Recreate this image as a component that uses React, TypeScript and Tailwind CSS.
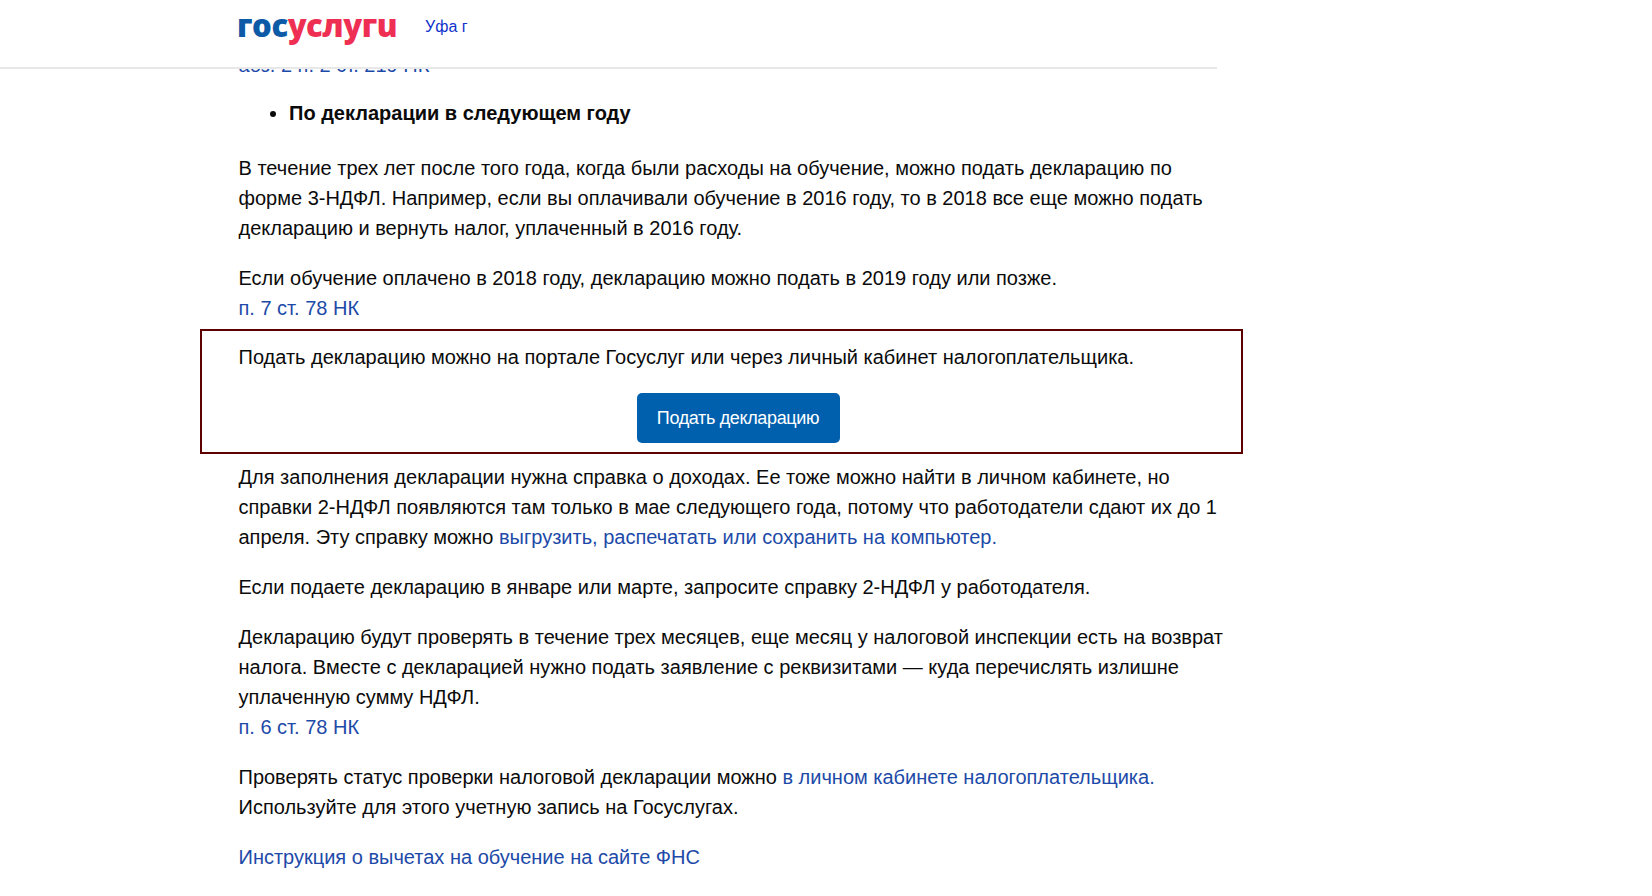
const L = ({ children }: { children: React.ReactNode }) => (
  <a className="text-[#1d4aa8]">{children}</a>
);

export default function App() {
  return (
    <div className="relative h-[896px] w-[1652px] overflow-hidden bg-white font-['Liberation_Sans',Arial,sans-serif] text-[20px] leading-[30px] text-[#0b0b0b]">
      <header className="absolute left-0 top-0 z-10 flex h-[69px] w-[1217px] items-start border-b-2 border-[#e8e8e8] bg-white pl-[237px]">
        <span className="mt-[4px] font-['Open_Sans',sans-serif] text-[31px] leading-[42px] font-extrabold tracking-[-0.45px]">
          <span className="text-[#0d5aa7]">гос</span>
          <span className="text-[#ee2f53]">услугu</span>
        </span>
        <span className="ml-[28px] mt-[12px] text-[16px] leading-[30px] text-[#1133cc]">Уфа г</span>
      </header>

      <main className="flex flex-col pl-[238.5px] pt-[50px] whitespace-nowrap">
        <p><L>абз. 2 п. 2 ст. 219 НК</L></p>
        <ul className="mt-[18px] list-disc pl-[50.5px] font-bold"><li>По декларации в следующем году</li></ul>
        <p className="mt-[25px]">
          В течение трех лет после того года, когда были расходы на обучение, можно подать декларацию по<br />
          форме 3-НДФЛ. Например, если вы оплачивали обучение в 2016 году, то в 2018 все еще можно подать<br />
          декларацию и вернуть налог, уплаченный в 2016 году.
        </p>
        <p className="mt-[20px]">
          Если обучение оплачено в 2018 году, декларацию можно подать в 2019 году или позже.<br />
          <L>п. 7 ст. 78 НК</L>
        </p>
        <section className="ml-[-38.5px] mt-[6px] flex h-[125px] w-[1043px] flex-col border-2 border-[#5c0000] pl-[36.5px] pt-[11px]">
          <p>Подать декларацию можно на портале Госуслуг или через личный кабинет налогоплательщика.</p>
          <button className="ml-[398px] mt-[21px] h-[50px] w-[203px] rounded-[5px] bg-[#0060ae] text-[18px] tracking-[-0.35px] text-white">Подать декларацию</button>
        </section>
        <p className="mt-[8px]">
          Для заполнения декларации нужна справка о доходах. Ее тоже можно найти в личном кабинете, но<br />
          справки 2-НДФЛ появляются там только в мае следующего года, потому что работодатели сдают их до 1<br />
          апреля. Эту справку можно <L>выгрузить, распечатать или сохранить на компьютер.</L>
        </p>
        <p className="mt-[20px]">Если подаете декларацию в январе или марте, запросите справку 2-НДФЛ у работодателя.</p>
        <p className="mt-[20px]">
          Декларацию будут проверять в течение трех месяцев, еще месяц у налоговой инспекции есть на возврат<br />
          налога. Вместе с декларацией нужно подать заявление с реквизитами — куда перечислять излишне<br />
          уплаченную сумму НДФЛ.<br />
          <L>п. 6 ст. 78 НК</L>
        </p>
        <p className="mt-[20px]">
          Проверять статус проверки налоговой декларации можно <L>в личном кабинете налогоплательщика.</L><br />
          Используйте для этого учетную запись на Госуслугах.
        </p>
        <p className="mt-[20px]"><L>Инструкция о вычетах на обучение на сайте ФНС</L></p>
      </main>
    </div>
  );
}
